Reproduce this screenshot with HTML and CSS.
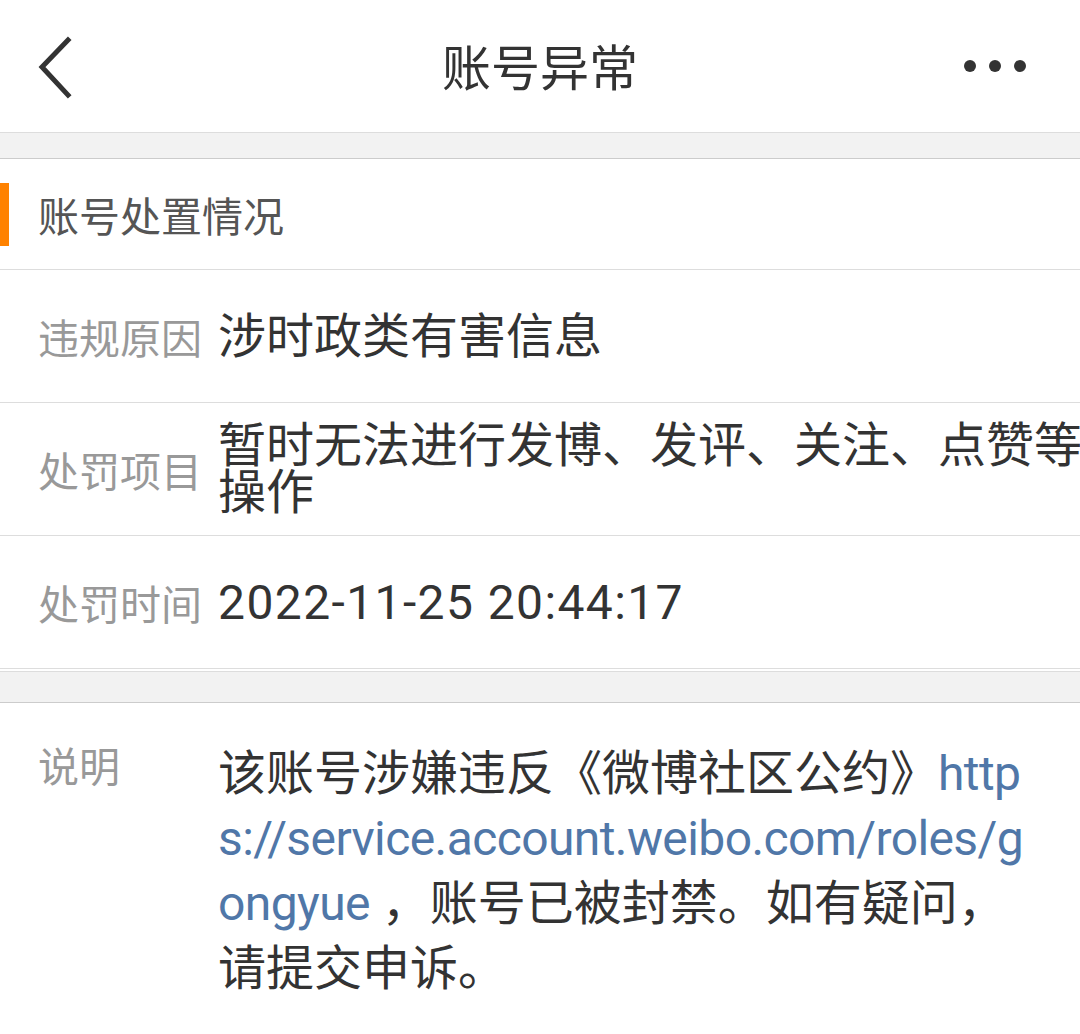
FILE: index.html
```html
<!DOCTYPE html>
<html>
<head>
	<meta charset="utf-8">
	<title>账号异常</title>
	<link rel="stylesheet" href="styles.css">
</head>
<body>
	<div class="topbar">
		<a class="topbar-back" href="#">
			<svg width="40" height="64" viewBox="0 0 40 64"><path d="M32 4 L6 31 L32 59" fill="none" stroke="#333" stroke-width="5" stroke-linecap="square"/></svg>
		</a>
		<h1 class="topbar-title">账号异常</h1>
		<a class="topbar-more" href="#">
			<svg width="64" height="16" viewBox="0 0 64 16"><circle cx="6" cy="8" r="6" fill="#333"/><circle cx="31" cy="8" r="6" fill="#333"/><circle cx="56" cy="8" r="6" fill="#333"/></svg>
		</a>
	</div>

	<div class="gap"></div>

	<div class="panel">
		<div class="panel-title">账号处置情况</div>
		<div class="row">
			<span class="row-label">违规原因</span>
			<span class="row-value">涉时政类有害信息</span>
		</div>
		<div class="row">
			<span class="row-label">处罚项目</span>
			<span class="row-value">暂时无法进行发博、发评、关注、点赞等操作</span>
		</div>
		<div class="row">
			<span class="row-label">处罚时间</span>
			<span class="row-value row-value-time">2022-11-25 20:44:17</span>
		</div>
	</div>

	<div class="gap gap-small"></div>

	<div class="note">
		<span class="note-label">说明</span>
		<p class="note-text">该账号涉嫌违反《微博社区公约》<a href="#">https://service.account.weibo.com/roles/gongyue</a> ，账号已被封禁。如有疑问，请提交申诉。</p>
	</div>
</body>
</html>
```

FILE: styles.css
```css
html, body {
	margin: 0;
	padding: 0;
	background: #fff;
	overflow-x: hidden;
}
body {
	font-family: Roboto, "Noto Sans CJK SC", sans-serif;
	color: #333;
}

/* top bar */
.topbar {
	height: 132px;
	display: flex;
	align-items: center;
	justify-content: space-between;
	padding: 0 52px 0 36px;
	box-sizing: border-box;
	position: relative;
}
.topbar-back,
.topbar-more {
	display: flex;
}
.topbar-back {
	margin-top: 4px;
}
.topbar-more {
	margin-top: 0;
}
.topbar-title {
	position: absolute;
	left: 0;
	right: 0;
	top: 0;
	margin: 0;
	text-align: center;
	font-size: 49px;
	font-weight: 400;
	line-height: 132px;
	margin-top: 4px;
	pointer-events: none;
}

/* grey separators */
.gap {
	height: 25px;
	background: #f2f2f2;
	border-top: 1px solid #ddd;
	border-bottom: 1px solid #ccc;
}
.gap-small {
	height: 30px;
	margin-top: 2px;
}

/* info panel */
.panel-title {
	height: 110px;
	display: flex;
	align-items: center;
	padding-left: 38px;
	font-size: 41px;
	color: #555;
	border-bottom: 1px solid #ddd;
	position: relative;
}
.panel-title:before {
	content: '';
	position: absolute;
	left: 0;
	top: 24px;
	width: 9px;
	height: 63px;
	background: #ff8200;
}
.row {
	display: grid;
	grid-template-columns: 180px 864px;
	align-items: center;
	min-height: 132px;
	padding-left: 38px;
	border-bottom: 1px solid #ddd;
}
.row:first-of-type {
	min-height: 133px;
}
.row-label {
	font-size: 41px;
	color: #999;
}
.row-value {
	font-size: 48px;
	line-height: 47px;
	color: #333;
}
.row-value-time {
	letter-spacing: 1.4px;
}

/* description */
.note {
	display: grid;
	grid-template-columns: 180px 815px;
	padding: 38px 0 0 38px;
}
.note-label {
	font-size: 41px;
	line-height: 50px;
	color: #999;
	margin-top: 2px;
}
.note-text {
	margin: 0;
	font-size: 48px;
	line-height: 65px;
	color: #333;
	word-break: break-all;
}
.note-text a {
	color: #5077a8;
	text-decoration: none;
	letter-spacing: -0.6px;
}
```
